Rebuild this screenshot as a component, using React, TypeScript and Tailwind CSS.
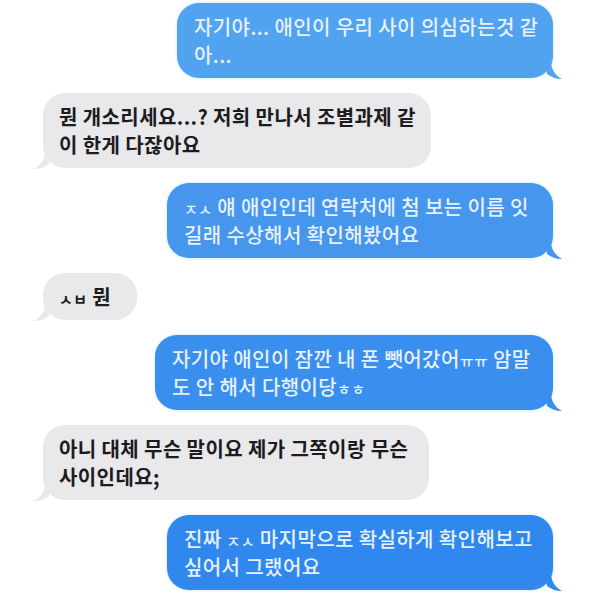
import type { ReactNode } from "react";

type Msg = {
  me: boolean;
  width: string;
  bg?: string;
  tail?: string;
  lines: ReactNode[];
};

const Jamo = ({ children }: { children: ReactNode }) => (
  <span className="text-[15px] leading-none">{children}</span>
);

const messages: Msg[] = [
  {
    me: true,
    width: "w-[376px]",
    bg: "bg-[#52a3ef]",
    tail: "text-[#52a3ef]",
    lines: ["자기야... 애인이 우리 사이 의심하는것 같", "아..."],
  },
  {
    me: false,
    width: "w-[388px]",
    lines: ["뭔 개소리세요...? 저희 만나서 조별과제 같", "이 한게 다잖아요"],
  },
  {
    me: true,
    width: "w-[386px]",
    bg: "bg-[#4596ec]",
    tail: "text-[#4596ec]",
    lines: [
      <>
        <Jamo>ㅈㅅ</Jamo> 얘 애인인데 연락처에 첨 보는 이름 잇
      </>,
      "길래 수상해서 확인해봤어요",
    ],
  },
  {
    me: false,
    width: "w-[94px]",
    lines: [
      <>
        <Jamo>ㅅㅂ</Jamo> 뭔
      </>,
    ],
  },
  {
    me: true,
    width: "w-[398px]",
    bg: "bg-[#3a8eee]",
    tail: "text-[#3a8eee]",
    lines: [
      <>
        자기야 애인이 잠깐 내 폰 뺏어갔어<Jamo>ㅠㅠ</Jamo> 암말
      </>,
      <>
        도 안 해서 다행이당<Jamo>ㅎㅎ</Jamo>
      </>,
    ],
  },
  {
    me: false,
    width: "w-[386px]",
    lines: ["아니 대체 무슨 말이요 제가 그쪽이랑 무슨", "사이인데요;"],
  },
  {
    me: true,
    width: "w-[386px]",
    bg: "bg-[#3088ee]",
    tail: "text-[#3088ee]",
    lines: [
      <>
        진짜 <Jamo>ㅈㅅ</Jamo> 마지막으로 확실하게 확인해보고
      </>,
      "싶어서 그랬어요",
    ],
  },
];

function Tail({ me }: { me: boolean }) {
  // little curled tail at the bottom corner
  return me ? (
    <svg
      className="absolute -right-[9px] bottom-[-1px] fill-current"
      width="16"
      height="18"
      viewBox="0 0 16 18"
    >
      <path d="M0 0 L5 0 C5 8 9 14 16 18 C10 18 5 16 1 13 Z" />
    </svg>
  ) : (
    <svg
      className="absolute -left-[9px] bottom-[-1px] fill-current"
      width="16"
      height="18"
      viewBox="0 0 16 18"
    >
      <path d="M16 0 L11 0 C11 8 7 14 0 18 C6 18 11 16 15 13 Z" />
    </svg>
  );
}

export default function App() {
  return (
    <div
      className="flex h-[599px] w-[600px] flex-col gap-[15px] overflow-hidden bg-white pt-[3px]"
      style={{ fontFamily: '"Noto Sans CJK KR", "Noto Sans", sans-serif' }}
    >
      {messages.map((m, i) => (
        <div
          key={i}
          className={m.me ? "flex justify-end pr-[47px]" : "flex justify-start pl-[43px]"}
        >
          <div
            className={
              m.me
                ? `relative ${m.width} rounded-[22px] ${m.bg} px-[17px] py-[9.5px] text-[20px] font-medium leading-[28px] tracking-[0.4px] text-[#e6f1fd] shadow-[0_0_3px_rgba(140,200,255,0.6)]`
                : `relative ${m.width} rounded-[22px] bg-[#e9e9eb] px-[16px] py-[9.5px] text-[20px] font-semibold leading-[28px] tracking-[0.4px] text-[#1c1c1e]`
            }
          >
            <div className="whitespace-nowrap">
              {m.lines.map((l, j) => (
                <div key={j}>{l}</div>
              ))}
            </div>
            <span className={m.me ? m.tail : "text-[#e9e9eb]"}>
              <Tail me={m.me} />
            </span>
          </div>
        </div>
      ))}
    </div>
  );
}
